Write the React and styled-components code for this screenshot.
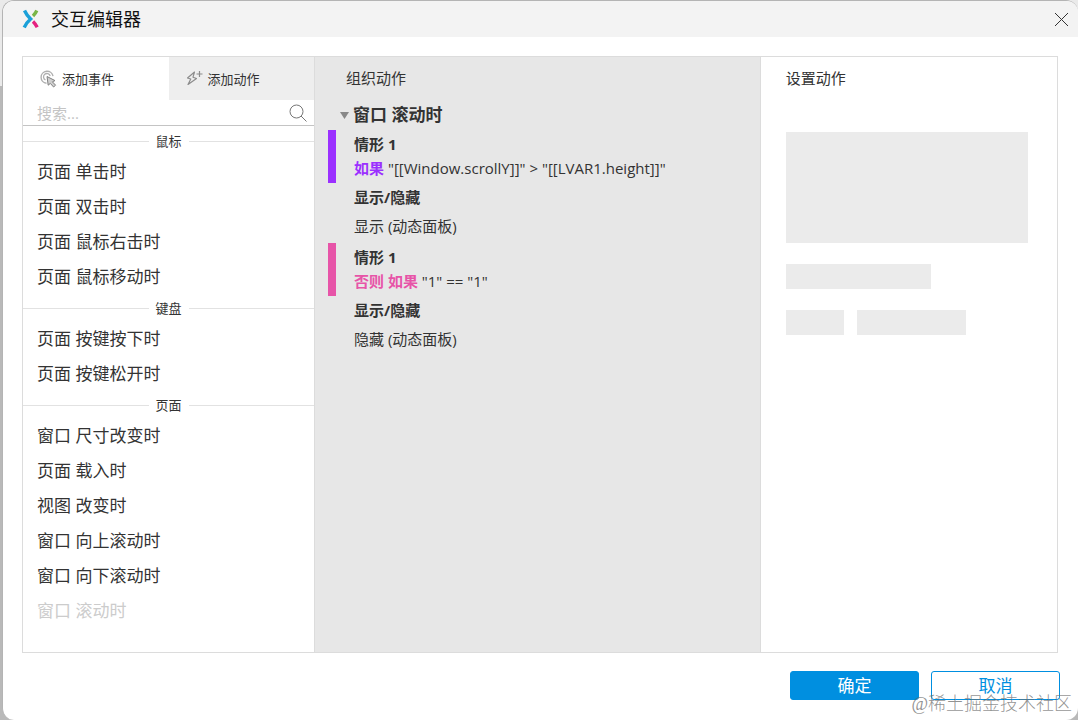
import React, { useState } from 'react';
import styled, { createGlobalStyle } from 'styled-components';

const GlobalStyle = createGlobalStyle`
    * {
        box-sizing: border-box;
    }
    body {
        margin: 0;
        color: #333;
        font-family: "Open Sans", "Noto Sans CJK SC", sans-serif;
        font-size: 15px;
    }
    button, input {
        font-family: inherit;
        color: inherit;
    }
    h1, h2, h3, p, ul {
        margin: 0;
        padding: 0;
        font-weight: normal;
    }
`;

const Backdrop = styled.div`
    min-height: 100vh;
    display: flex;
    padding: 0 0 0 2px;
    background: linear-gradient(#eaeaea 86px, #b9b9b9 86px);
`;

const Dialog = styled.main`
    position: relative;
    flex: 1;
    display: flex;
    flex-direction: column;
    overflow: hidden;
    background: #fff;
    border: 1px solid #b4b4b4;
    border-width: 1px 0 0 1px;
    border-radius: 12px;
`;

const TitleBar = styled.header`
    display: flex;
    align-items: center;
    gap: 11px;
    height: 36px;
    padding: 0 9px 0 19px;
    background: #f3f3f3;
`;

const Title = styled.h1`
    flex: 1;
    color: #111;
    font-size: 18px;
    line-height: 24px;
`;

const CloseButton = styled.button`
    display: flex;
    padding: 0;
    border: 0;
    background: none;
    cursor: pointer;
`;

const Panels = styled.div`
    flex: 1;
    display: grid;
    grid-template-columns: 291px 3fr 2fr;
    margin: 19px 20px 0 19px;
    border: 1px solid #dcdcdc;
`;

const Panel = styled.section`
    min-width: 0;
    background: ${props => props.$shaded ? `#e7e7e7` : `#fff`};
    padding-left: ${props => props.$indent || `0`};
    border-left: ${props => props.$indent ? `1px solid #dcdcdc` : `0`};
`;

const PanelTitle = styled.h2`
    padding-left: ${props => props.$inset ? `18px` : `0`};
    font-size: 15px;
    line-height: 43px;
`;

const Tabs = styled.div`
    display: grid;
    grid-template-columns: 1fr 1fr;
`;

const Tab = styled.button`
    display: flex;
    align-items: center;
    gap: 4px;
    height: 43px;
    padding: 0 17px;
    border: 0;
    background: ${props => props.$active ? `#fff` : `#eee`};
    font-size: 13px;
    cursor: pointer;
`;

const SearchBox = styled.label`
    display: flex;
    align-items: center;
    height: 26px;
    padding: 0 6px 0 14px;
    border-bottom: 1px solid #c4c4c4;
`;

const SearchInput = styled.input`
    flex: 1;
    min-width: 0;
    padding: 0;
    border: 0;
    outline: 0;
    background: none;
    font-size: 15px;
    &::placeholder {
        color: #c4c4c4;
    }
`;

const GroupTitle = styled.h3`
    display: flex;
    align-items: center;
    gap: 7px;
    margin-top: 3px;
    font-size: 13px;
    line-height: 24px;
    &::before, &::after {
        content: "";
        flex: 1;
        border-top: 1px solid #e2e2e2;
    }
`;

const EventList = styled.ul`
    list-style: none;
`;

const EventButton = styled.button`
    display: block;
    width: 100%;
    height: 35px;
    padding: 0 14px;
    border: 0;
    background: none;
    font-size: 17px;
    text-align: left;
    cursor: pointer;
    &:disabled {
        color: #ccc;
        cursor: default;
    }
`;

const EventTitle = styled.h3`
    display: flex;
    align-items: center;
    gap: 4px;
    padding-left: 12px;
    font-size: 17px;
    font-weight: bold;
    line-height: 30px;
`;

const Case = styled.div`
    padding: 2px 0 3px 18px;
    border-left: 8px solid ${props => props.color};
    line-height: 24px;
`;

const CaseName = styled.p`
    font-weight: bold;
`;

const Keyword = styled.b`
    color: ${props => props.color};
`;

const Actions = styled.div`
    padding: 0 0 2px 26px;
    line-height: 29px;
`;

const ActionName = styled.p`
    font-weight: bold;
`;

const Placeholders = styled.div`
    display: flex;
    flex-direction: column;
    gap: 21px;
    padding: 32px 29px 0 0;
`;

const PlaceholderRow = styled.div`
    display: flex;
    gap: 13px;
`;

const Placeholder = styled.div`
    width: ${props => props.width};
    height: ${props => props.$tall ? `111px` : `25px`};
    background: #ebebeb;
`;

const Footer = styled.footer`
    display: flex;
    justify-content: flex-end;
    gap: 12px;
    padding: 18px 18px 20px;
`;

const Button = styled.button`
    width: 129px;
    height: 29px;
    padding: 0;
    border: 1px solid #008fe0;
    border-radius: 3px;
    background: ${props => props.$primary ? `#008fe0` : `#fff`};
    color: ${props => props.$primary ? `#fff` : `#008fe0`};
    font-size: 17px;
    line-height: 24px;
    cursor: pointer;
`;

const Watermark = styled.div`
    position: absolute;
    right: 6px;
    bottom: 4px;
    color: rgba(110, 110, 110, 0.75);
    font-family: "Liberation Serif", "Noto Sans CJK SC", serif;
    font-size: 18px;
    font-weight: 300;
    line-height: 24px;
    pointer-events: none;
`;

const Logo = () => (
    <svg width="18" height="20" viewBox="0 0 18 20" fill="none" strokeWidth="3.4" aria-hidden="true">
        <path d="M2.5 1.5 Q4.5 6 8.6 10 Q4.5 13.5 2.2 18.5" stroke="#1ba0d8" />
        <path d="M14.8 1.5 Q13.4 4.6 11 7" stroke="#7ab648" />
        <path d="M11 12.5 Q13.6 15 15.2 18.3" stroke="#e5217f" />
    </svg>
);

const CloseIcon = () => (
    <svg width="15" height="15" viewBox="0 0 15 15" stroke="#333" aria-hidden="true">
        <path d="M1 1 14 14M14 1 1 14" />
    </svg>
);

const ClickIcon = () => (
    <svg width="18" height="18" viewBox="0 0 18 18" fill="none" stroke="#b0b0b0" aria-hidden="true">
        <path d="M6.5 13.2A6 6 0 1 1 13 6.2" strokeWidth="1.4" />
        <path d="M5.5 10A3.4 3.4 0 1 1 10.2 6" strokeWidth="1.3" />
        <path d="M7 6.5 8.2 15.2 10.3 13.4 13.6 17 15.6 15.2 12.4 11.8 15 10.6z" fill="#d0d0d0" stroke="#808080" strokeLinejoin="round" />
    </svg>
);

const BoltIcon = () => (
    <svg width="18" height="18" viewBox="0 0 18 18" fill="none" stroke="#8c8c8c" strokeWidth="1.2" aria-hidden="true">
        <path d="M8.5 2 1.5 8 4.8 9 2 14.5 10.5 8.5 7 7.2z" strokeLinejoin="round" />
        <path d="M13.5 1v6M10.5 4h6" />
    </svg>
);

const SearchIcon = () => (
    <svg width="20" height="20" viewBox="0 0 20 20" fill="none" stroke="#777" aria-hidden="true">
        <circle cx="8.5" cy="8.5" r="6.5" />
        <path d="M13 13 18.5 18.5" />
    </svg>
);

const CaretIcon = () => (
    <svg width="9" height="7" viewBox="0 0 9 7" fill="#888" aria-hidden="true">
        <path d="M0 0h9L4.5 7z" />
    </svg>
);

const groups = [
    { name: '鼠标', events: ['页面 单击时', '页面 双击时', '页面 鼠标右击时', '页面 鼠标移动时'] },
    { name: '键盘', events: ['页面 按键按下时', '页面 按键松开时'] },
    { name: '页面', events: ['窗口 尺寸改变时', '页面 载入时', '视图 改变时', '窗口 向上滚动时', '窗口 向下滚动时', '窗口 滚动时'] },
];

const usedEvent = '窗口 滚动时';

const cases = [
    { color: '#9b30ff', keyword: '如果', condition: '"[[Window.scrollY]]" > "[[LVAR1.height]]"', action: '显示 (动态面板)' },
    { color: '#e754a8', keyword: '否则 如果', condition: '"1" == "1"', action: '隐藏 (动态面板)' },
];

const App = () => {
    const [search, setSearch] = useState('');

    return (
        <Backdrop>
            <GlobalStyle />
            <Dialog>
                <TitleBar>
                    <Logo />
                    <Title>交互编辑器</Title>
                    <CloseButton aria-label="关闭"><CloseIcon /></CloseButton>
                </TitleBar>
                <Panels>
                    <Panel>
                        <Tabs>
                            <Tab $active><ClickIcon />添加事件</Tab>
                            <Tab><BoltIcon />添加动作</Tab>
                        </Tabs>
                        <SearchBox>
                            <SearchInput
                                aria-label="搜索"
                                placeholder="搜索..."
                                value={search}
                                onChange={e => setSearch(e.target.value)}
                            />
                            <SearchIcon />
                        </SearchBox>
                        {groups.map(group => (
                            <React.Fragment key={group.name}>
                                <GroupTitle>{group.name}</GroupTitle>
                                <EventList>
                                    {group.events.filter(name => name.includes(search)).map(name => (
                                        <li key={name}>
                                            <EventButton disabled={name === usedEvent}>{name}</EventButton>
                                        </li>
                                    ))}
                                </EventList>
                            </React.Fragment>
                        ))}
                    </Panel>
                    <Panel $shaded $indent="13px">
                        <PanelTitle $inset>组织动作</PanelTitle>
                        <EventTitle><CaretIcon />窗口 滚动时</EventTitle>
                        {cases.map(item => (
                            <React.Fragment key={item.keyword}>
                                <Case color={item.color}>
                                    <CaseName>情形 1</CaseName>
                                    <p><Keyword color={item.color}>{item.keyword}</Keyword> {item.condition}</p>
                                </Case>
                                <Actions>
                                    <ActionName>显示/隐藏</ActionName>
                                    <p>{item.action}</p>
                                </Actions>
                            </React.Fragment>
                        ))}
                    </Panel>
                    <Panel $indent="25px">
                        <PanelTitle>设置动作</PanelTitle>
                        <Placeholders>
                            <Placeholder $tall width="100%" />
                            <Placeholder width="60%" />
                            <PlaceholderRow>
                                <Placeholder width="24%" />
                                <Placeholder width="45%" />
                            </PlaceholderRow>
                        </Placeholders>
                    </Panel>
                </Panels>
                <Footer>
                    <Button $primary>确定</Button>
                    <Button>取消</Button>
                </Footer>
                <Watermark>@稀土掘金技术社区</Watermark>
            </Dialog>
        </Backdrop>
    );
};

export default App;
